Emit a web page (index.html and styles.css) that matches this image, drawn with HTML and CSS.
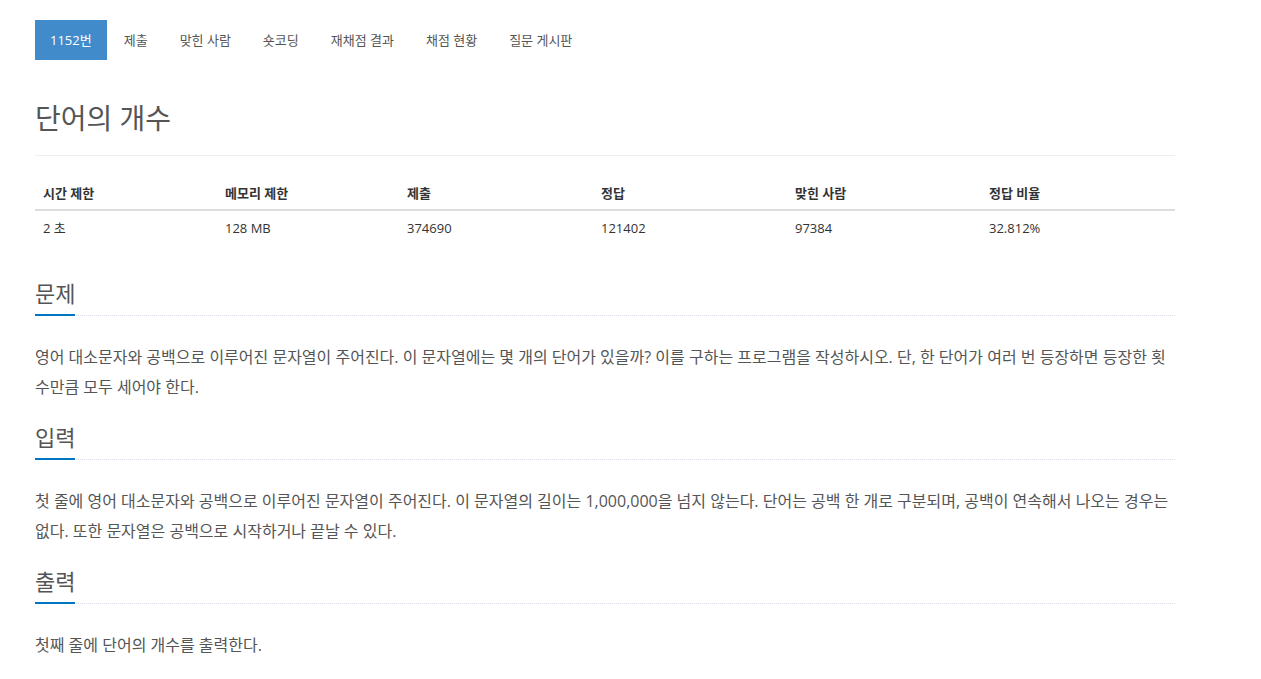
FILE: index.html
```html
<!DOCTYPE html>
<html lang="ko">
<head>
<meta charset="utf-8">
<title>단어의 개수</title>
<link rel="stylesheet" href="styles.css">
</head>
<body>
<div class="container">
  <ul class="nav-pills">
    <li class="active"><a href="#">1152번</a></li>
    <li><a href="#">제출</a></li>
    <li><a href="#">맞힌 사람</a></li>
    <li><a href="#">숏코딩</a></li>
    <li><a href="#">재채점 결과</a></li>
    <li><a href="#">채점 현황</a></li>
    <li><a href="#">질문 게시판</a></li>
  </ul>

  <div class="page-header">
    <h1>단어의 개수</h1>
  </div>

  <table class="info-table">
    <thead>
      <tr>
        <th class="c1">시간 제한</th>
        <th class="c2">메모리 제한</th>
        <th class="c3">제출</th>
        <th class="c4">정답</th>
        <th class="c5">맞힌 사람</th>
        <th class="c6">정답 비율</th>
      </tr>
    </thead>
    <tbody>
      <tr>
        <td>2 초</td>
        <td>128 MB</td>
        <td>374690</td>
        <td>121402</td>
        <td>97384</td>
        <td>32.812%</td>
      </tr>
    </tbody>
  </table>

  <section class="problem-section">
    <div class="headline"><h2>문제</h2></div>
    <p>영어 대소문자와 공백으로 이루어진 문자열이 주어진다. 이 문자열에는 몇 개의 단어가 있을까? 이를 구하는 프로그램을 작성하시오. 단, 한 단어가 여러 번 등장하면 등장한 횟수만큼 모두 세어야 한다.</p>
  </section>

  <section class="problem-section">
    <div class="headline"><h2>입력</h2></div>
    <p>첫 줄에 영어 대소문자와 공백으로 이루어진 문자열이 주어진다. 이 문자열의 길이는 1,000,000을 넘지 않는다. 단어는 공백 한 개로 구분되며, 공백이 연속해서 나오는 경우는 없다. 또한 문자열은 공백으로 시작하거나 끝날 수 있다.</p>
  </section>

  <section class="problem-section">
    <div class="headline"><h2>출력</h2></div>
    <p>첫째 줄에 단어의 개수를 출력한다.</p>
  </section>
</div>
</body>
</html>
```

FILE: styles.css
```css
html, body {
  margin: 0;
  padding: 0;
  background: #fff;
}

body {
  font-family: "Open Sans", "Noto Sans CJK KR", sans-serif;
  color: #555;
  font-size: 13px;
  line-height: 20px;
}

.container {
  width: 1140px;
  margin-left: 35px;
  padding-top: 20px;
}

.nav-pills {
  list-style: none;
  margin: 0;
  padding: 0;
  display: flex;
  gap: 2px;
}

.nav-pills a {
  display: block;
  padding: 10px 15px;
  color: #555;
  text-decoration: none;
  font-size: 13px;
  line-height: 20px;
}

.nav-pills .active a {
  background: #428bca;
  color: #fff;
}

.page-header {
  margin-top: 43px;
  padding-bottom: 21px;
  border-bottom: 1px solid #eee;
}

.page-header h1 {
  margin: 0;
  font-size: 28px;
  line-height: 31px;
  font-weight: 400;
  color: #555;
}

.info-table {
  margin-top: 19px;
  width: 100%;
  border-collapse: collapse;
  table-layout: fixed;
  color: #333;
}

.info-table th,
.info-table td {
  text-align: left;
  padding: 8px;
  font-size: 13px;
  line-height: 20px;
}

.info-table th {
  font-weight: 700;
  padding-bottom: 6px;
  border-bottom: 2px solid #ddd;
}

.info-table td {
  padding-top: 7px;
}

.info-table .c1, .info-table .c2 { width: 166px; }

.problem-section {
  margin-top: 35px;
}

.problem-section + .problem-section {
  margin-top: 23px;
}

.headline {
  border-bottom: 1px dotted #dcdde8;
}

.headline h2 {
  display: inline-block;
  margin: 0 0 -1px;
  padding-bottom: 9px;
  border-bottom: 2px solid #0076c0;
  font-size: 22px;
  line-height: 24px;
  font-weight: 400;
  color: #555;
}

.problem-section p {
  margin: 26px 0 0;
  font-size: 16px;
  line-height: 30px;
  color: #555;
}
```
